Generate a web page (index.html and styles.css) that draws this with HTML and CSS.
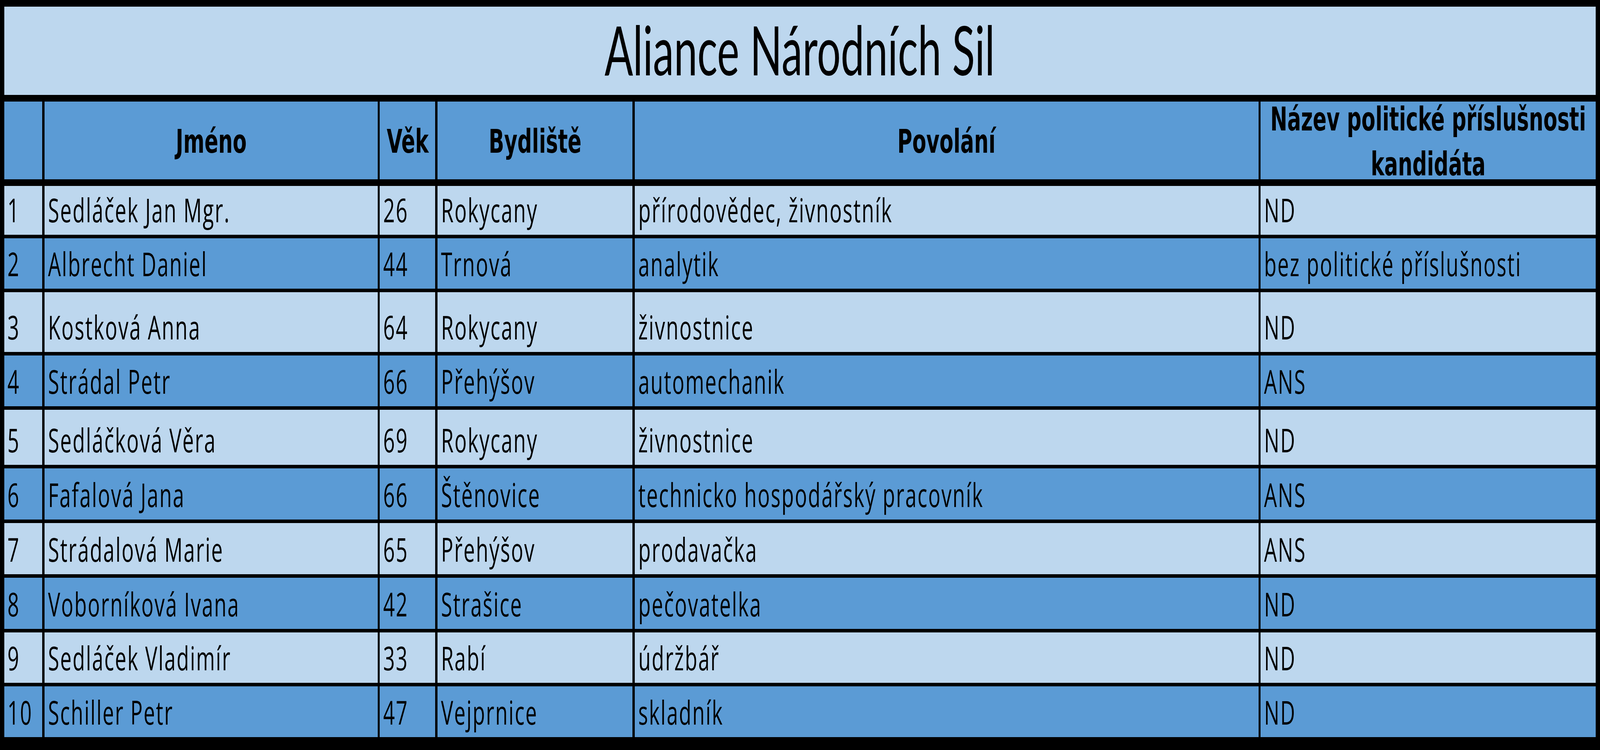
FILE: index.html
```html
<!DOCTYPE html>
<html lang="cs">
<head>
<meta charset="utf-8">
<title>Aliance Národních Sil</title>
<link rel="stylesheet" href="styles.css">
</head>
<body>
<div class="sheet">
  <div class="title"><span class="t">Aliance Národních Sil</span></div>

  <div class="hd"></div>
  <div class="hd"><span class="t">Jméno</span></div>
  <div class="hd"><span class="t">Věk</span></div>
  <div class="hd"><span class="t">Bydliště</span></div>
  <div class="hd"><span class="t">Povolání</span></div>
  <div class="hd"><span class="t">Název politické příslušnosti<br>kandidáta</span></div>

  <div class="c l"><span class="t">1</span></div><div class="c l"><span class="t">Sedláček Jan Mgr.</span></div><div class="c l"><span class="t">26</span></div><div class="c l"><span class="t">Rokycany</span></div><div class="c l"><span class="t">přírodovědec, živnostník</span></div><div class="c l"><span class="t">ND</span></div>
  <div class="c d"><span class="t">2</span></div><div class="c d"><span class="t">Albrecht Daniel</span></div><div class="c d"><span class="t">44</span></div><div class="c d"><span class="t">Trnová</span></div><div class="c d"><span class="t">analytik</span></div><div class="c d"><span class="t">bez politické příslušnosti</span></div>
  <div class="c l"><span class="t">3</span></div><div class="c l"><span class="t">Kostková Anna</span></div><div class="c l"><span class="t">64</span></div><div class="c l"><span class="t">Rokycany</span></div><div class="c l"><span class="t">živnostnice</span></div><div class="c l"><span class="t">ND</span></div>
  <div class="c d"><span class="t">4</span></div><div class="c d"><span class="t">Strádal Petr</span></div><div class="c d"><span class="t">66</span></div><div class="c d"><span class="t">Přehýšov</span></div><div class="c d"><span class="t">automechanik</span></div><div class="c d"><span class="t">ANS</span></div>
  <div class="c l"><span class="t">5</span></div><div class="c l"><span class="t">Sedláčková Věra</span></div><div class="c l"><span class="t">69</span></div><div class="c l"><span class="t">Rokycany</span></div><div class="c l"><span class="t">živnostnice</span></div><div class="c l"><span class="t">ND</span></div>
  <div class="c d"><span class="t">6</span></div><div class="c d"><span class="t">Fafalová Jana</span></div><div class="c d"><span class="t">66</span></div><div class="c d"><span class="t">Štěnovice</span></div><div class="c d"><span class="t">technicko hospodářský pracovník</span></div><div class="c d"><span class="t">ANS</span></div>
  <div class="c l"><span class="t">7</span></div><div class="c l"><span class="t">Strádalová Marie</span></div><div class="c l"><span class="t">65</span></div><div class="c l"><span class="t">Přehýšov</span></div><div class="c l"><span class="t">prodavačka</span></div><div class="c l"><span class="t">ANS</span></div>
  <div class="c d"><span class="t">8</span></div><div class="c d"><span class="t">Voborníková Ivana</span></div><div class="c d"><span class="t">42</span></div><div class="c d"><span class="t">Strašice</span></div><div class="c d"><span class="t">pečovatelka</span></div><div class="c d"><span class="t">ND</span></div>
  <div class="c l"><span class="t">9</span></div><div class="c l"><span class="t">Sedláček Vladimír</span></div><div class="c l"><span class="t">33</span></div><div class="c l"><span class="t">Rabí</span></div><div class="c l"><span class="t">údržbář</span></div><div class="c l"><span class="t">ND</span></div>
  <div class="c d"><span class="t">10</span></div><div class="c d"><span class="t">Schiller Petr</span></div><div class="c d"><span class="t">47</span></div><div class="c d"><span class="t">Vejprnice</span></div><div class="c d"><span class="t">skladník</span></div><div class="c d"><span class="t">ND</span></div>
</div>
<script src="fit.js"></script>
</body>
</html>
```

FILE: fit.js
```js
(function () {
  var root = document.documentElement;
  function fit() {
    var w = root.clientWidth || window.innerWidth;
    root.style.setProperty('--sx', String(w / 6619));
  }
  fit();
  window.addEventListener('resize', fit);
})();
```

FILE: styles.css
```css
:root {
  --sx: 1;
}

html, body {
  margin: 0;
  padding: 0;
  background: #ffffff;
  overflow: hidden;
}

/* Horizontal measures are expressed in units of the 6619px-wide design
   (1 unit = 100vw / 6619), vertical measures in px. */
.sheet {
  width: 100vw;
  height: 1920px;
  box-sizing: border-box;
  background: #000000;
  padding: 17px 0.272vw 17px 0.2568vw;
  display: grid;
  grid-template-columns: 158fr 1378fr 230fr 807fr 2580fr 1386fr;
  grid-template-rows: 234px 207px 125px 129px 153px 130px 141px 131px 131px 131px 129px 130px;
  column-gap: 0.136vw;
  row-gap: 9px;
  font-family: "Open Sans", Lato, "Noto Sans", sans-serif;
  color: #000000;
}

.t {
  display: inline-block;
  flex: none;
  white-space: nowrap;
  transform: scaleX(var(--sx));
}

.title {
  grid-column: 1 / -1;
  margin-bottom: 8px;
  background: #BDD7EE;
  display: flex;
  align-items: center;
  justify-content: center;
  overflow: hidden;
  font-family: Lato, "Open Sans", sans-serif;
  font-size: 174px;
  line-height: 1;
  padding-bottom: 8px;
}

.title .t {
  transform-origin: 50% 50%;
}

.hd {
  background: #5B9BD5;
  margin-bottom: 8px;
  display: flex;
  align-items: center;
  justify-content: center;
  overflow: hidden;
  text-align: center;
  font-family: "DejaVu Sans", Verdana, sans-serif;
  font-weight: bold;
  font-size: 84px;
  line-height: 115px;
  padding-top: 6px;
}

.hd .t {
  transform-origin: 50% 50%;
}

.c {
  display: flex;
  align-items: flex-end;
  overflow: hidden;
  font-size: 84px;
  letter-spacing: 4px;
  line-height: 1;
  padding: 0 0 22px 0.2115vw;
}

.c .t {
  transform-origin: 0 100%;
}

.l {
  background: #BDD7EE;
}

.d {
  background: #5B9BD5;
}
```
